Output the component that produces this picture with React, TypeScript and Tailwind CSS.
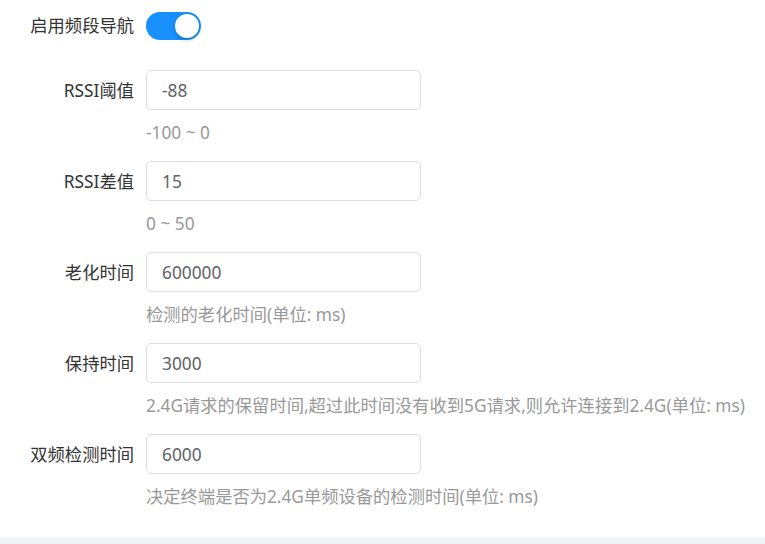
const FIELDS = [
  { label: "RSSI阈值", value: "-88", hint: "-100 ~ 0" },
  { label: "RSSI差值", value: "15", hint: "0 ~ 50" },
  { label: "老化时间", value: "600000", hint: "检测的老化时间(单位: ms)" },
  {
    label: "保持时间",
    value: "3000",
    hint: "2.4G请求的保留时间,超过此时间没有收到5G请求,则允许连接到2.4G(单位: ms)",
  },
  { label: "双频检测时间", value: "6000", hint: "决定终端是否为2.4G单频设备的检测时间(单位: ms)" },
]

const App = () => {
  return (
    <div className="min-h-screen bg-[#f0f2f5] font-['Noto_Sans','Noto_Sans_CJK_SC',sans-serif] text-[17.3px]">
      <div className="h-[537px] bg-white pt-3">
        {/* switch row */}
        <div className="flex h-7 items-center">
          <label className="w-[134px] whitespace-nowrap text-right text-[#333]">启用频段导航</label>
          <div className="ml-3 flex h-7 w-[55px] items-center justify-end rounded-full bg-[#1890ff] px-[2px]">
            <span className="h-6 w-6 rounded-full bg-white shadow-[0_2px_4px_rgba(0,35,11,0.2)]" />
          </div>
        </div>

        <div className="mt-[30px] flex flex-col">
          {FIELDS.map(f => (
            <FormItem key={f.label} label={f.label} value={f.value} hint={f.hint} />
          ))}
        </div>
      </div>
    </div>
  )
}

type FormItemProps = {
  label: string
  value: string
  hint: string
}

const FormItem = ({ label, value, hint }: FormItemProps) => {
  return (
    <div className="mb-[16px] flex">
      <label className="flex h-10 w-[134px] items-center justify-end whitespace-nowrap pt-px text-[#333]">
        {label}
      </label>
      <div className="ml-3 flex flex-col">
        <input
          defaultValue={value}
          className="h-10 w-[275px] rounded-[5px] border border-[#dcdfe6] pl-[15px] pt-px text-[#606266] outline-none"
        />
        <p className="mt-[10px] whitespace-nowrap leading-[25px] text-[#999]">{hint}</p>
      </div>
    </div>
  )
}

export default App
